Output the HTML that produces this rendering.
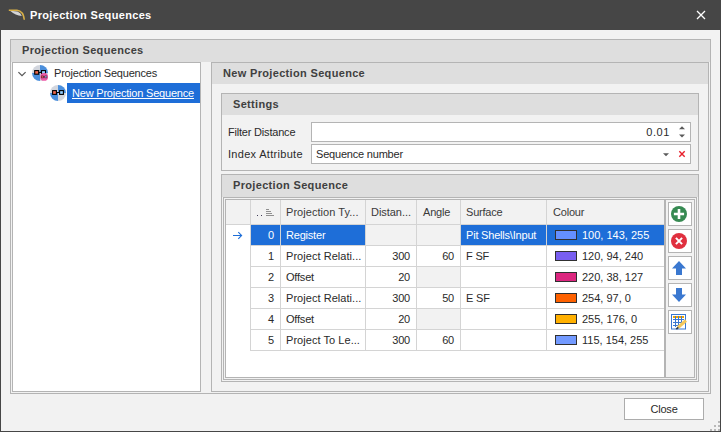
<!DOCTYPE html>
<html><head><meta charset="utf-8">
<style>
*{box-sizing:border-box;margin:0;padding:0}
html,body{width:722px;height:433px;overflow:hidden;background:#f2f2f2}
body{position:relative;font:11px "Liberation Sans",sans-serif;color:#202020}
.a{position:absolute}
.bx{position:absolute;border:1px solid #b4b4b4}
.t{position:absolute;white-space:nowrap;line-height:15px;letter-spacing:-0.2px;color:#2a2a2a}
.b{font-weight:bold;letter-spacing:0.33px;color:#404040}
.hdr{position:absolute;background:#dedede}
.gl{position:absolute;background:#d4d4d4}
.btn{position:absolute;left:668px;width:24px;height:24px;border:1px solid #b4b4b4;background:#fff}
</style></head><body>
<!-- window frame -->
<div class="a" style="left:0;top:0;width:722px;height:30px;background:#464646"></div>
<div class="a" style="left:721px;top:0;width:1px;height:433px;background:#fff"></div>
<div class="a" style="left:0;top:432px;width:722px;height:1px;background:#fff"></div>
<div class="a" style="left:0;top:0;width:1px;height:432px;background:#464646"></div>
<div class="a" style="left:720px;top:0;width:1px;height:432px;background:#464646"></div>
<div class="a" style="left:0;top:431px;width:721px;height:1px;background:#464646"></div>
<!-- title icon -->
<svg class="a" style="left:8px;top:9px" width="18" height="14" viewBox="0 0 18 14">
<path d="M2 1.8 L9.5 2.4 Q12.8 3.6 13.8 7 Q7.5 6.5 2 1.8Z" fill="#d4d4d4"/>
<path d="M0.8 1.2 L9 1.2 Q15.5 2 16.3 10.8" fill="none" stroke="#d8b048" stroke-width="1.5"/>
</svg>
<div class="t" style="left:30px;top:8px;color:#fff;font-weight:bold;letter-spacing:0.33px">Projection Sequences</div>
<!-- close X -->
<svg class="a" style="left:696px;top:10px" width="10" height="10" viewBox="0 0 10 10">
<path d="M1 1L9 9M9 1L1 9" stroke="#fff" stroke-width="1.3"/>
</svg>

<!-- outer group -->
<div class="bx" style="left:10px;top:39px;width:701px;height:355px"></div>
<div class="hdr" style="left:11px;top:40px;width:699px;height:22px"></div>
<div class="t b" style="left:22px;top:43px">Projection Sequences</div>

<!-- tree panel -->
<div class="bx" style="left:12px;top:62px;width:189px;height:330px;background:#fff"></div>
<svg class="a" style="left:18px;top:71px" width="8" height="7" viewBox="0 0 8 7"><path d="M0.4 1.1L4 4.7L7.6 1.1" fill="none" stroke="#555" stroke-width="1.2"/></svg>
<svg class="a" style="left:32px;top:65px" width="16" height="16" viewBox="0 0 16 16">
<path d="M8 0A8 8 0 0 0 0 8H8Z" fill="#d2d6de"/><path d="M8 0A8 8 0 0 1 16 8H8Z" fill="#4b8fdc"/>
<path d="M0 8A8 8 0 0 0 8 16V8Z" fill="#4b8fdc"/><path d="M16 8A8 8 0 0 1 8 16V8Z" fill="#d2d6de"/>
<rect x="2.7" y="5.6" width="4" height="3.6" fill="#f36a4e" stroke="#000" stroke-width="1.1"/>
<rect x="9.5" y="5.6" width="4" height="3.6" fill="#94ceff" stroke="#000" stroke-width="1.1"/>
<path d="M6.7 7.4H9.5" stroke="#000" stroke-width="1"/>
<circle cx="12.1" cy="11.9" r="3.9" fill="#ee5aa8"/>
<rect x="9.3" y="10.9" width="2" height="2" fill="#f36a4e" stroke="#5a1a3a" stroke-width="0.6"/>
<rect x="12.9" y="10.9" width="2" height="2" fill="#94ceff" stroke="#5a1a3a" stroke-width="0.6"/>
<path d="M11.3 11.9H12.9" stroke="#3a1020" stroke-width="0.8"/>
</svg>
<div class="t" style="left:54px;top:66px">Projection Sequences</div>
<svg class="a" style="left:50px;top:85px" width="16" height="16" viewBox="0 0 16 16">
<path d="M8 0A8 8 0 0 0 0 8H8Z" fill="#d2d6de"/><path d="M8 0A8 8 0 0 1 16 8H8Z" fill="#4b8fdc"/>
<path d="M0 8A8 8 0 0 0 8 16V8Z" fill="#4b8fdc"/><path d="M16 8A8 8 0 0 1 8 16V8Z" fill="#d2d6de"/>
<rect x="2.6" y="5.6" width="3.8" height="3.8" fill="#f36a4e" stroke="#000" stroke-width="1.1"/>
<rect x="9.6" y="5.6" width="3.8" height="3.8" fill="#94ceff" stroke="#000" stroke-width="1.1"/>
<path d="M6.4 7.5H9.6" stroke="#000" stroke-width="1"/>
</svg>
<div class="a" style="left:67px;top:83px;width:133px;height:20px;background:#1e6ed8"></div>
<div class="t" style="left:72px;top:86px;color:#fff;text-decoration:underline;text-decoration-skip-ink:none">New Projection Sequence</div>

<!-- right panel -->
<div class="bx" style="left:211px;top:62px;width:498px;height:330px"></div>
<div class="hdr" style="left:212px;top:63px;width:496px;height:21px"></div>
<div class="t b" style="left:223px;top:66px">New Projection Sequence</div>

<!-- settings group -->
<div class="bx" style="left:221px;top:93px;width:478px;height:78px"></div>
<div class="hdr" style="left:222px;top:94px;width:476px;height:21px"></div>
<div class="t b" style="left:233px;top:97px">Settings</div>
<div class="t" style="left:228px;top:125px">Filter Distance</div>
<div class="t" style="left:228px;top:147px;letter-spacing:0.3px">Index Attribute</div>
<div class="bx" style="left:311px;top:122px;width:380px;height:20px;background:#fff"></div>
<div class="t" style="left:630px;top:125px;width:40px;text-align:right;letter-spacing:0.6px">0.01</div>
<svg class="a" style="left:678px;top:125px" width="8" height="14" viewBox="0 0 8 14"><path d="M1 4.2L4 1.2L7 4.2Z" fill="#5a5a5a"/><path d="M1 9.6L4 12.6L7 9.6Z" fill="#5a5a5a"/></svg>
<div class="bx" style="left:311px;top:144px;width:380px;height:20px;background:#fff"></div>
<div class="t" style="left:316px;top:147px">Sequence number</div>
<svg class="a" style="left:663px;top:153px" width="6" height="4" viewBox="0 0 6 4"><path d="M0 0.3H6L3 3.3Z" fill="#5a5a5a"/></svg>
<svg class="a" style="left:678px;top:150px" width="8" height="8" viewBox="0 0 8 8"><path d="M1.3 1.3L6.7 6.7M6.7 1.3L1.3 6.7" stroke="#e8202c" stroke-width="1.4"/></svg>

<!-- projection sequence group -->
<div class="bx" style="left:221px;top:174px;width:478px;height:208px"></div>
<div class="hdr" style="left:222px;top:175px;width:476px;height:22px"></div>
<div class="t b" style="left:233px;top:178px">Projection Sequence</div>
<div class="bx" style="left:223px;top:197px;width:474px;height:183px"></div>
<div class="bx" style="left:225px;top:199px;width:470px;height:179px"></div>

<!-- grid -->
<div class="a" style="left:226px;top:200px;width:439px;height:177px;background:#fff"></div>
<div class="a" style="left:226px;top:200px;width:439px;height:24px;background:#f2f2f2"></div>
<div class="gl" style="left:226px;top:224px;width:439px;height:1px"></div>
<div class="a" style="left:664px;top:200px;width:2px;height:177px;background:#b4b4b4"></div>
<!-- header column lines -->
<div class="gl" style="left:250px;top:200px;width:1px;height:24px"></div>
<div class="gl" style="left:280px;top:200px;width:1px;height:151px"></div>
<div class="gl" style="left:365px;top:200px;width:1px;height:151px"></div>
<div class="gl" style="left:416px;top:200px;width:1px;height:151px"></div>
<div class="gl" style="left:460px;top:200px;width:1px;height:151px"></div>
<div class="gl" style="left:546px;top:200px;width:1px;height:151px"></div>
<div class="gl" style="left:250px;top:224px;width:1px;height:127px"></div>
<!-- header text -->
<div class="a" style="left:257px;top:215px;width:1px;height:1px;background:#403c58"></div>
<div class="a" style="left:261px;top:215px;width:1px;height:1px;background:#403c58"></div>
<div class="a" style="left:266px;top:209px;width:3px;height:1px;background:#909090"></div>
<div class="a" style="left:266px;top:211px;width:5px;height:1px;background:#909090"></div>
<div class="a" style="left:266px;top:213px;width:6px;height:1px;background:#909090"></div>
<div class="a" style="left:266px;top:215px;width:8px;height:1px;background:#909090"></div>
<div class="t" style="left:286px;top:205px;color:#3a3a3a;letter-spacing:0.05px">Projection Ty...</div>
<div class="t" style="left:371px;top:205px;color:#3a3a3a;letter-spacing:-0.05px">Distan...</div>
<div class="t" style="left:423px;top:205px;color:#3a3a3a">Angle</div>
<div class="t" style="left:466px;top:205px;color:#3a3a3a">Surface</div>
<div class="t" style="left:553px;top:205px;color:#3a3a3a">Colour</div>

<!-- rows -->
<!--ROWS-->
<div class="a" style="left:251px;top:225px;width:29px;height:20px;background:#1e6ed8"></div>
<div class="a" style="left:281px;top:225px;width:84px;height:20px;background:#1e6ed8"></div>
<div class="a" style="left:461px;top:225px;width:85px;height:20px;background:#1e6ed8"></div>
<div class="a" style="left:547px;top:225px;width:117px;height:20px;background:#1e6ed8"></div>
<div class="a" style="left:366px;top:225px;width:50px;height:20px;background:#f2f2f2"></div>
<div class="a" style="left:417px;top:225px;width:43px;height:20px;background:#f2f2f2"></div>
<div class="gl" style="left:251px;top:245px;width:413px;height:1px"></div>
<div class="t" style="left:251px;top:228px;width:23px;text-align:right;color:#fff">0</div>
<div class="t" style="left:286px;top:228px;color:#fff;letter-spacing:-0.2px">Register</div>
<div class="t" style="left:466px;top:228px;color:#fff">Pit Shells\Input</div>
<div class="a" style="left:555px;top:230px;width:22px;height:10px;border:1px solid #303030;background:rgb(100, 143, 255)"></div>
<div class="t" style="left:582px;top:228px;color:#fff;letter-spacing:0">100, 143, 255</div>
<div class="gl" style="left:251px;top:266px;width:413px;height:1px"></div>
<div class="t" style="left:251px;top:249px;width:23px;text-align:right;color:#2a2a2a">1</div>
<div class="t" style="left:286px;top:249px;color:#2a2a2a;letter-spacing:0.05px">Project Relati...</div>
<div class="t" style="left:366px;top:249px;width:44px;text-align:right">300</div>
<div class="t" style="left:417px;top:249px;width:37px;text-align:right">60</div>
<div class="t" style="left:466px;top:249px;color:#2a2a2a">F SF</div>
<div class="a" style="left:555px;top:251px;width:22px;height:10px;border:1px solid #303030;background:rgb(120, 94, 240)"></div>
<div class="t" style="left:582px;top:249px;color:#2a2a2a;letter-spacing:0">120, 94, 240</div>
<div class="a" style="left:417px;top:267px;width:43px;height:20px;background:#f2f2f2"></div>
<div class="gl" style="left:251px;top:287px;width:413px;height:1px"></div>
<div class="t" style="left:251px;top:270px;width:23px;text-align:right;color:#2a2a2a">2</div>
<div class="t" style="left:286px;top:270px;color:#2a2a2a;letter-spacing:-0.2px">Offset</div>
<div class="t" style="left:366px;top:270px;width:44px;text-align:right">20</div>
<div class="a" style="left:555px;top:272px;width:22px;height:10px;border:1px solid #303030;background:rgb(220, 38, 127)"></div>
<div class="t" style="left:582px;top:270px;color:#2a2a2a;letter-spacing:0">220, 38, 127</div>
<div class="gl" style="left:251px;top:308px;width:413px;height:1px"></div>
<div class="t" style="left:251px;top:291px;width:23px;text-align:right;color:#2a2a2a">3</div>
<div class="t" style="left:286px;top:291px;color:#2a2a2a;letter-spacing:0.05px">Project Relati...</div>
<div class="t" style="left:366px;top:291px;width:44px;text-align:right">300</div>
<div class="t" style="left:417px;top:291px;width:37px;text-align:right">50</div>
<div class="t" style="left:466px;top:291px;color:#2a2a2a">E SF</div>
<div class="a" style="left:555px;top:293px;width:22px;height:10px;border:1px solid #303030;background:rgb(254, 97, 0)"></div>
<div class="t" style="left:582px;top:291px;color:#2a2a2a;letter-spacing:0">254, 97, 0</div>
<div class="a" style="left:417px;top:309px;width:43px;height:20px;background:#f2f2f2"></div>
<div class="gl" style="left:251px;top:329px;width:413px;height:1px"></div>
<div class="t" style="left:251px;top:312px;width:23px;text-align:right;color:#2a2a2a">4</div>
<div class="t" style="left:286px;top:312px;color:#2a2a2a;letter-spacing:-0.2px">Offset</div>
<div class="t" style="left:366px;top:312px;width:44px;text-align:right">20</div>
<div class="a" style="left:555px;top:314px;width:22px;height:10px;border:1px solid #303030;background:rgb(255, 176, 0)"></div>
<div class="t" style="left:582px;top:312px;color:#2a2a2a;letter-spacing:0">255, 176, 0</div>
<div class="gl" style="left:251px;top:350px;width:413px;height:1px"></div>
<div class="t" style="left:251px;top:333px;width:23px;text-align:right;color:#2a2a2a">5</div>
<div class="t" style="left:286px;top:333px;color:#2a2a2a;letter-spacing:0.05px">Project To Le...</div>
<div class="t" style="left:366px;top:333px;width:44px;text-align:right">300</div>
<div class="t" style="left:417px;top:333px;width:37px;text-align:right">60</div>
<div class="a" style="left:555px;top:335px;width:22px;height:10px;border:1px solid #303030;background:rgb(115, 154, 255)"></div>
<div class="t" style="left:582px;top:333px;color:#2a2a2a;letter-spacing:0">115, 154, 255</div>
<svg class="a" style="left:232px;top:231px" width="11" height="9" viewBox="0 0 11 9"><path d="M1 4.5H9.6M6.3 1.2L9.6 4.5L6.3 7.8" fill="none" stroke="#1e6ed8" stroke-width="1.1"/></svg>
<!--/ROWS-->

<!-- side buttons -->
<div class="btn" style="top:202px"></div>
<svg class="a" style="left:671px;top:206px" width="16" height="16" viewBox="0 0 16 16"><circle cx="8" cy="8" r="8" fill="#378a52"/><path d="M8 2.9V13.1M2.9 8H13.1" stroke="#fff" stroke-width="2.6"/></svg>
<div class="btn" style="top:229px"></div>
<svg class="a" style="left:671px;top:233px" width="16" height="16" viewBox="0 0 16 16"><circle cx="8" cy="8" r="8" fill="#e0303f"/><path d="M4.9 4.9L11.1 11.1M11.1 4.9L4.9 11.1" stroke="#fff" stroke-width="2"/></svg>
<div class="btn" style="top:256px"></div>
<svg class="a" style="left:671px;top:260px" width="16" height="16" viewBox="0 0 16 16"><path d="M8 1L15 8.5H11V15H5V8.5H1Z" fill="#3a78d0"/></svg>
<div class="btn" style="top:283px"></div>
<svg class="a" style="left:671px;top:287px" width="16" height="16" viewBox="0 0 16 16"><path d="M5 1H11V7.5H15L8 15L1 7.5H5Z" fill="#3a78d0"/></svg>
<div class="btn" style="top:310px"></div>
<svg class="a" style="left:671px;top:314px" width="17" height="17" viewBox="0 0 17 17">
<rect x="0.5" y="0.5" width="14" height="14.5" fill="#fff" stroke="#3a78d0"/>
<rect x="2" y="2" width="11" height="2" fill="#f2a400"/>
<path d="M4.5 2V13M7.5 2V13M10.5 2V11M2 5.5H13M2 8.5H12M2 11.5H9" stroke="#3a78d0" stroke-width="1"/>
<path d="M7 13.5L15 6.5" stroke="#f4c85c" stroke-width="3"/>
<path d="M5.3 15.2L7.3 13.4" stroke="#2c3a4c" stroke-width="1.8"/>
</svg>

<!-- close button -->
<div class="bx" style="left:624px;top:398px;width:80px;height:22px;background:#fff;border-color:#acacac"></div>
<div class="t" style="left:624px;top:402px;width:80px;text-align:center">Close</div>
<!-- grip -->
<div class="a" style="left:718px;top:421px;width:2px;height:2px;background:#b8b8b8"></div>
<div class="a" style="left:714px;top:425px;width:2px;height:2px;background:#b8b8b8"></div>
<div class="a" style="left:718px;top:425px;width:2px;height:2px;background:#b8b8b8"></div>
<div class="a" style="left:710px;top:429px;width:2px;height:2px;background:#b8b8b8"></div>
<div class="a" style="left:714px;top:429px;width:2px;height:2px;background:#b8b8b8"></div>
<div class="a" style="left:718px;top:429px;width:2px;height:2px;background:#b8b8b8"></div>
</body></html>
